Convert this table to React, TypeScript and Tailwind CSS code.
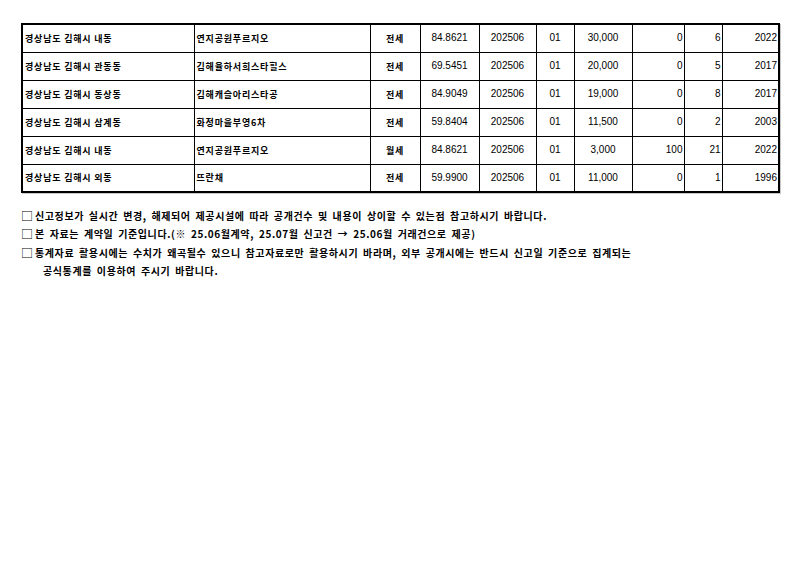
const rows = [
  ['경상남도 김해시 내동', '연지공원푸르지오', '전세', '84.8621', '202506', '01', '30,000', '0', '6', '2022'],
  ['경상남도 김해시 관동동', '김해율하서희스타힐스', '전세', '69.5451', '202506', '01', '20,000', '0', '5', '2017'],
  ['경상남도 김해시 동상동', '김해캐슬아리스타공', '전세', '84.9049', '202506', '01', '19,000', '0', '8', '2017'],
  ['경상남도 김해시 삼계동', '화정마을부영6차', '전세', '59.8404', '202506', '01', '11,500', '0', '2', '2003'],
  ['경상남도 김해시 내동', '연지공원푸르지오', '월세', '84.8621', '202506', '01', '3,000', '100', '21', '2022'],
  ['경상남도 김해시 외동', '뜨란채', '전세', '59.9900', '202506', '01', '11,000', '0', '1', '1996'],
]

const widths = [172, 176, 50, 59, 57, 38, 58, 52, 38, 57]

const notes = [
  '신고정보가 실시간 변경, 해제되어 제공시설에 따라 공개건수 및 내용이 상이할 수 있는점 참고하시기 바랍니다.',
  '본 자료는 계약일 기준입니다.(※ 25.06월계약, 25.07월 신고건 → 25.06월 거래건으로 제공)',
  '통계자료 활용시에는 수치가 왜곡될수 있으니 참고자료로만 활용하시기 바라며, 외부 공개시에는 반드시 신고일 기준으로 집계되는',
]

function cellClass(i: number) {
  if (i < 2) return 'text-left pl-[2px] font-bold text-[9px] tracking-[0.8px] font-["Noto_Sans_CJK_KR",sans-serif]'
  if (i === 2) return 'text-center font-bold text-[9px] tracking-[0.8px] font-["Noto_Sans_CJK_KR",sans-serif]'
  if (i < 7) return 'text-center text-[10px] font-["Liberation_Sans","Noto_Sans_CJK_KR",sans-serif]'
  return 'text-right pr-[1px] text-[10px] font-["Liberation_Sans","Noto_Sans_CJK_KR",sans-serif]'
}

export default function App() {
  return (
    <div className="w-[800px] h-[566px] bg-white text-black overflow-hidden">
      <div className="pl-[21px] pt-[23px]">
        <table className="border-collapse table-fixed border-2 border-black shadow-[1px_1px_0_#c8c8c8]">
          <colgroup>
            {widths.map((w, i) => (
              <col key={i} style={{ width: w }} />
            ))}
          </colgroup>
          <tbody>
            {rows.map((r, ri) => (
              <tr key={ri} className="h-[28px]">
                {r.map((c, ci) => (
                  <td key={ci} className={`border border-black p-0 leading-none whitespace-nowrap ${cellClass(ci)}`}>
                    {c}
                  </td>
                ))}
              </tr>
            ))}
          </tbody>
        </table>
        <div className="mt-[14px] font-['Noto_Sans_CJK_KR',sans-serif] font-bold text-[10px] leading-[18.4px] tracking-[0.6px] [word-spacing:2px]">
          {notes.map((n, i) => (
            <div key={i} className="flex whitespace-nowrap">
              <span className="w-[14px] font-normal text-[12px] tracking-normal">□</span>
              <span>{n}</span>
            </div>
          ))}
          <div className="pl-[22px] whitespace-nowrap">공식통계를 이용하여 주시기 바랍니다.</div>
        </div>
      </div>
    </div>
  )
}
